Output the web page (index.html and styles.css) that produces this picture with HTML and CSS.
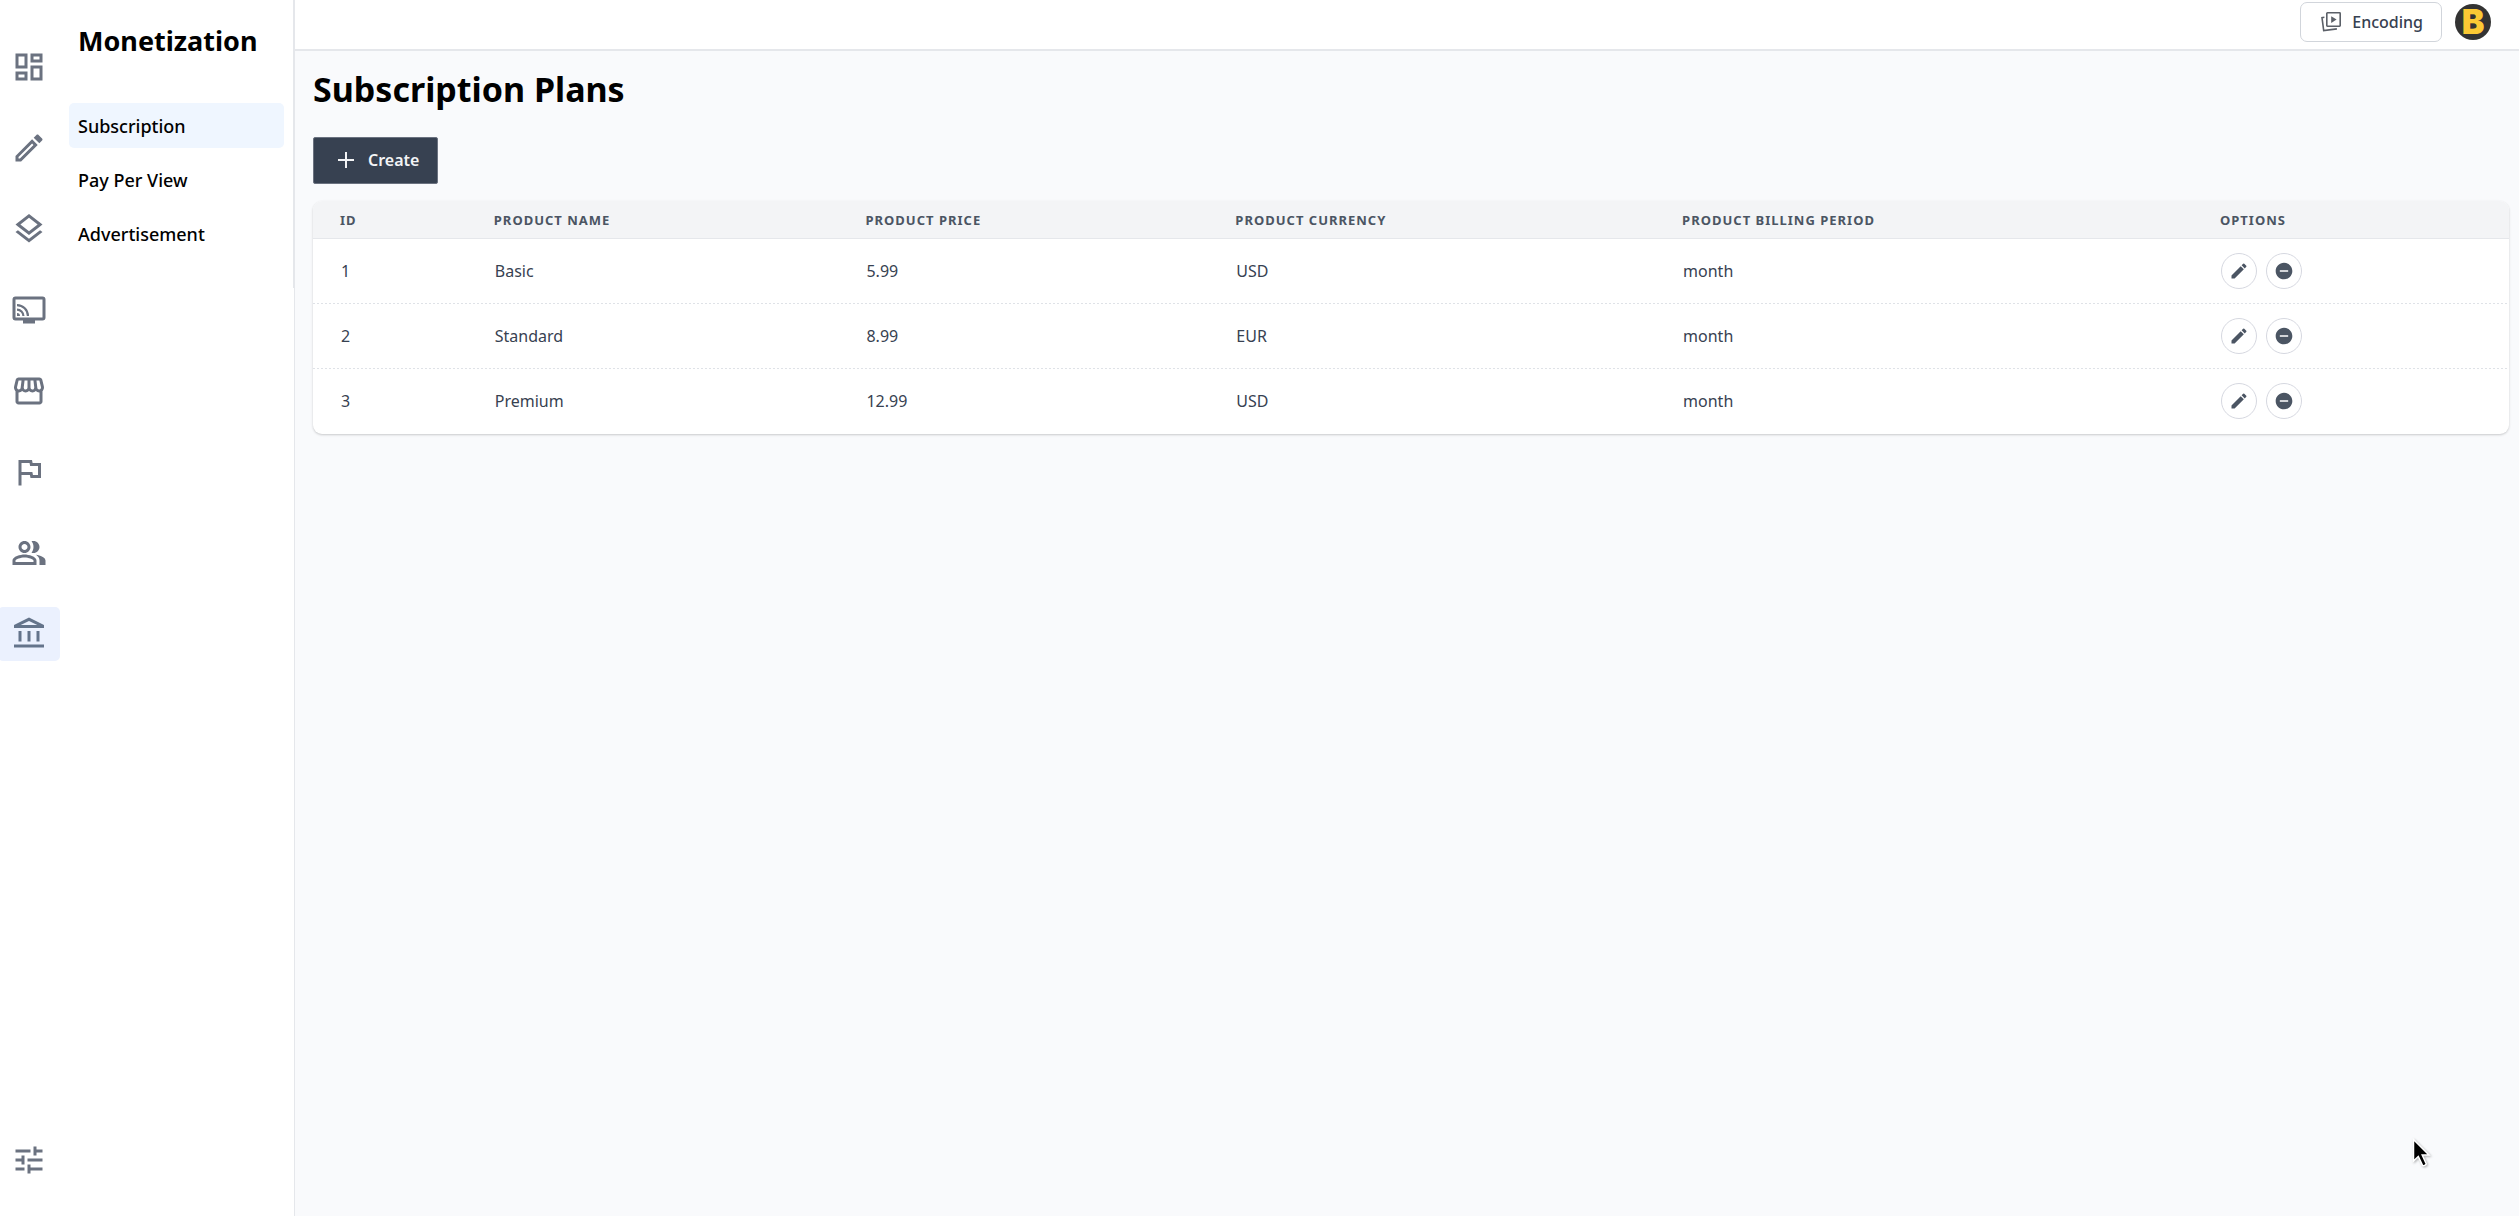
FILE: index.html
```html
<!DOCTYPE html>
<html lang="en">
<head>
<meta charset="utf-8">
<title>Subscription Plans</title>
<link rel="stylesheet" href="styles.css">
</head>
<body>
<svg class="sprite" aria-hidden="true">
  <symbol id="edit" viewBox="0 0 24 24"><path d="M3 17.25V21h3.750L17.810 9.940l-3.750-3.750L3 17.250zM20.710 7.040a1 1 0 0 0 0-1.410l-2.340-2.340a1 1 0 0 0-1.410 0l-1.830 1.830 3.750 3.750 1.830-1.830z"/></symbol>
  <symbol id="remove" viewBox="0 0 24 24"><path d="M12 2C6.480 2 2 6.480 2 12s4.480 10 10 10 10-4.480 10-10S17.520 2 12 2zm5 11H7v-2h10v2z"/></symbol>
</svg>
<div class="app">
  <aside class="sidebar">
    <nav class="rail" aria-label="Sections">
      <a class="rail-item" href="#" aria-label="Dashboard"><svg viewBox="0 0 24 24"><path d="M19 5v2h-4V5h4M9 5v6H5V5h4m10 8v6h-4v-6h4M9 17v2H5v-2h4M21 3h-8v6h8V3zM11 3H3v10h8V3zm10 8h-8v10h8V11zm-10 4H3v6h8v-6z"/></svg></a>
      <a class="rail-item" href="#" aria-label="Edit"><svg viewBox="0 0 24 24"><path d="M14.060 9.020l.920.920L5.920 19H5v-.920l9.060-9.060M17.660 3c-.250 0-.510.100-.700.290l-1.830 1.830 3.750 3.750 1.830-1.830c.390-.390.390-1.020 0-1.410l-2.340-2.340c-.200-.200-.450-.290-.710-.290zm-3.600 3.190L3 17.250V21h3.750L17.810 9.940l-3.750-3.750z"/></svg></a>
      <a class="rail-item" href="#" aria-label="Layers"><svg viewBox="0 0 24 24"><path d="M11.990 18.540l-7.370-5.730L3 14.070l9 7 9-7-1.630-1.270-7.380 5.740zM12 16l7.360-5.730L21 9l-9-7-9 7 1.630 1.270L12 16zm0-11.470L17.740 9 12 13.470 6.260 9 12 4.530z"/></svg></a>
      <a class="rail-item" href="#" aria-label="Streams"><svg viewBox="0 0 24 24"><path d="M21 3H3a2 2 0 0 0-2 2v12a2 2 0 0 0 2 2h5v2h8v-2h5a2 2 0 0 0 2-2V5a2 2 0 0 0-2-2zm0 14H3V5h18v12zM4 14v2h2a2 2 0 0 0-2-2zm0-3v1.430A3.570 3.570 0 0 1 7.570 16H9a5 5 0 0 0-5-5zm0-3v1.450A6.550 6.550 0 0 1 10.550 16H12a8 8 0 0 0-8-8z"/></svg></a>
      <a class="rail-item" href="#" aria-label="Store"><svg viewBox="0 0 24 24"><path d="M21.900 8.890l-1.050-4.370c-.220-.900-1-1.520-1.910-1.520H5.050c-.900 0-1.690.630-1.900 1.520L2.100 8.890c-.240 1.020-.020 2.060.620 2.880.080.110.190.190.280.290V19c0 1.100.900 2 2 2h14c1.100 0 2-.900 2-2v-6.940c.090-.090.200-.180.280-.280.640-.820.870-1.870.620-2.890zM18.910 4.990l1.050 4.370c.100.420.010.840-.250 1.170-.140.180-.440.470-.940.470-.610 0-1.140-.490-1.210-1.140L16.980 5l1.930-.010zM13 5h1.960l.540 4.520c.050.390-.070.780-.330 1.070-.220.260-.540.410-.950.410-.670 0-1.220-.590-1.220-1.310V5zM8.490 9.520L9.040 5H11v4.690c0 .720-.550 1.310-1.290 1.310-.340 0-.650-.150-.890-.410-.250-.290-.370-.680-.330-1.070zM4.040 9.360L5.050 5h1.970l-.580 4.860c-.080.650-.600 1.140-1.210 1.140-.490 0-.800-.290-.930-.470-.270-.320-.360-.750-.260-1.170zM5 19v-6.030c.080.010.150.030.230.030.870 0 1.660-.360 2.240-.950.600.600 1.400.950 2.310.950.870 0 1.650-.360 2.230-.930.590.570 1.390.930 2.290.930.840 0 1.640-.350 2.240-.950.580.590 1.370.950 2.240.950.080 0 .150-.020.230-.030V19H5z"/></svg></a>
      <a class="rail-item" href="#" aria-label="Reports"><svg viewBox="0 0 24 24"><path d="M12.360 6l.400 2H18v6h-3.360l-.400-2H7V6h5.360M14 4H5v17h2v-7h5.600l.400 2h7V6h-5.600L14 4z"/></svg></a>
      <a class="rail-item" href="#" aria-label="Users"><svg viewBox="0 0 24 24"><path d="M16.670 13.130C18.040 14.060 19 15.320 19 17v3h4v-3c0-2.180-3.570-3.470-6.330-3.870zM15 12c2.210 0 4-1.790 4-4s-1.790-4-4-4c-.470 0-.910.100-1.330.240C14.500 5.270 15 6.580 15 8s-.500 2.730-1.330 3.760c.420.140.860.240 1.330.240zM9 12c2.210 0 4-1.790 4-4s-1.790-4-4-4-4 1.790-4 4 1.790 4 4 4zm0-6c1.100 0 2 .900 2 2s-.900 2-2 2-2-.900-2-2 .900-2 2-2zM9 13c-2.670 0-8 1.340-8 4v3h16v-3c0-2.660-5.330-4-8-4zm6 5H3v-.990C3.200 16.290 6.300 15 9 15s5.800 1.290 6 2v1z"/></svg></a>
      <a class="rail-item active" href="#" aria-label="Monetization"><svg viewBox="0 0 24 24"><path fill-rule="evenodd" d="M5 10h2v7H5zM11 10h2v7h-2zM17 10h2v7h-2zM2 19h20v2H2zM12 1l10 5v2H2V6zM6.450 6h11.100L12 3.250z"/></svg></a>
      <a class="rail-item last" href="#" aria-label="Settings"><svg viewBox="0 0 24 24"><path d="M3 17v2h6v-2H3zM3 5v2h10V5H3zm10 16v-2h8v-2h-8v-2h-2v6h2zM7 9v2H3v2h4v2h2V9H7zm14 4v-2H11v2h10zm-6-4h2V7h4V5h-4V3h-2v6z"/></svg></a>
    </nav>
    <nav class="panel" aria-label="Monetization">
      <h2 class="panel-title">Monetization</h2>
      <a class="panel-link active" href="#">Subscription</a>
      <a class="panel-link" href="#">Pay Per View</a>
      <a class="panel-link" href="#">Advertisement</a>
    </nav>
  </aside>
  <div class="content">
    <header class="topbar">
      <button class="encoding" type="button"><svg viewBox="0 0 20 20" fill="none" stroke="currentColor" stroke-width="1.600"><rect x="5.800" y="0.800" width="13.400" height="13.400" rx="0.600"/><path d="M3.400 5.300L1 5.600l1.700 13 13.200-1.700"/><path d="M10.200 4.200v6.800l5.400-3.400z" fill="currentColor" stroke="none"/></svg>Encoding</button>
      <a class="avatar" href="#" aria-label="Account">B</a>
    </header>
    <main class="main">
      <h1 class="title">Subscription Plans</h1>
      <button class="create" type="button"><svg viewBox="0 0 18 18" fill="none" stroke="currentColor" stroke-width="2"><path d="M9 1v16M1 9h16"/></svg>Create</button>
      <div class="card">
        <table class="plans">
          <thead>
            <tr><th>ID</th><th>Product Name</th><th>Product Price</th><th>Product Currency</th><th>Product Billing Period</th><th>Options</th></tr>
          </thead>
          <tbody>
            <tr><td>1</td><td>Basic</td><td>5.99</td><td>USD</td><td>month</td><td><div class="actions"><button class="round" type="button" aria-label="Edit Basic"><svg><use href="#edit"/></svg></button><button class="round" type="button" aria-label="Remove Basic"><svg><use href="#remove"/></svg></button></div></td></tr>
            <tr><td>2</td><td>Standard</td><td>8.99</td><td>EUR</td><td>month</td><td><div class="actions"><button class="round" type="button" aria-label="Edit Standard"><svg><use href="#edit"/></svg></button><button class="round" type="button" aria-label="Remove Standard"><svg><use href="#remove"/></svg></button></div></td></tr>
            <tr><td>3</td><td>Premium</td><td>12.99</td><td>USD</td><td>month</td><td><div class="actions"><button class="round" type="button" aria-label="Edit Premium"><svg><use href="#edit"/></svg></button><button class="round" type="button" aria-label="Remove Premium"><svg><use href="#remove"/></svg></button></div></td></tr>
          </tbody>
        </table>
      </div>
    </main>
  </div>
</div>
<svg class="pointer" viewBox="0 0 19 30" aria-hidden="true"><path d="M1.500 1.500v21.500l4.800-4.600 4.200 9c.5 1 4.200-.6 3.700-1.700l-4-8.700h6.800z" fill="#000" stroke="#fff" stroke-width="1.500"/></svg>
</body>
</html>
```
FILE: styles.css
```css
* {
  box-sizing: border-box;
}

body {
  margin: 0;
  font-family: "Noto Sans", sans-serif;
  font-size: 16px;
  line-height: 24px;
  color: #000;
  background: #f9fafc;
}

a {
  color: inherit;
  text-decoration: none;
}

button {
  font: inherit;
  cursor: pointer;
}

.sprite {
  display: none;
}

.app {
  display: flex;
  min-height: 100vh;
}

.sidebar {
  display: flex;
  flex: none;
  align-items: stretch;
  background: #fff;
  border-right: 1px solid #e5e7eb;
}

.rail {
  display: flex;
  flex-direction: column;
  gap: 27px;
  width: 69px;
  padding: 40px 9px 29px 0;
}

.rail-item {
  display: flex;
  justify-content: center;
  margin-left: -2px;
  padding: 9px 0;
  border-radius: 5px;
  color: #6b7280;
}

.rail-item svg {
  width: 36px;
  height: 36px;
  fill: currentColor;
}

.rail-item.active {
  background: #ebf1fe;
  color: #64748b;
}

.rail-item.last {
  margin-top: auto;
}

.panel {
  display: flex;
  flex-direction: column;
  align-self: flex-start;
  gap: 9px;
  width: 225px;
  min-height: 288px;
  padding: 23px 9px 0 0;
  border-right: 1px solid #e5e7eb;
}

.panel-title {
  margin: 0 0 35px;
  padding-left: 9px;
  font-size: 27px;
  line-height: 36px;
  font-weight: 700;
}

.panel-link {
  padding: 10px 9px 8px;
  border-radius: 5px;
  font-size: 18px;
  line-height: 27px;
  font-weight: 500;
}

.panel-link.active {
  background: #eff6ff;
}

.content {
  flex: 1;
  min-width: 0;
}

.topbar {
  display: flex;
  justify-content: flex-end;
  align-items: center;
  gap: 13px;
  padding: 2px 28px 7px;
  background: #fff;
  border-bottom: 2px solid #e5e7eb;
}

.encoding {
  display: flex;
  align-items: center;
  gap: 11px;
  height: 40px;
  padding: 0 18px 0 20px;
  color: #374151;
  background: #fff;
  border: 1px solid #d1d5db;
  border-radius: 7px;
  font-weight: 500;
}

.encoding svg {
  width: 20px;
  height: 20px;
  color: #5b6068;
}

.avatar {
  display: flex;
  justify-content: center;
  align-items: center;
  width: 36px;
  height: 36px;
  border-radius: 50%;
  background: #333;
  color: #fbc934;
  font-family: Inter, sans-serif;
  font-size: 34px;
  line-height: 36px;
  font-weight: 900;
}

.main {
  padding: 18px 10px 18px 18px;
}

.title {
  margin: 0 0 27px;
  font-size: 34px;
  line-height: 41px;
  font-weight: 700;
}

.create {
  display: flex;
  align-items: center;
  gap: 13px;
  height: 47px;
  margin-bottom: 17px;
  padding: 0 18px 2px 23px;
  color: #f3f4f6;
  background: #374151;
  border: 1px solid #6b7280;
  border-radius: 2px;
  font-weight: 600;
}

.create svg {
  width: 18px;
  height: 18px;
}

.card {
  overflow: hidden;
  background: #fff;
  border-radius: 9px;
  box-shadow: 0 1px 3px rgba(0, 0, 0, 0.1), 0 1px 2px rgba(0, 0, 0, 0.1);
}

.plans {
  width: 100%;
  border-spacing: 0;
  color: #374151;
  text-align: left;
}

.plans th {
  height: 38px;
  padding: 0 27px;
  background: #f3f4f6;
  border-bottom: 1px solid #e5e7eb;
  color: #4b5563;
  font-size: 13px;
  line-height: 18px;
  font-weight: 700;
  letter-spacing: 1px;
  text-transform: uppercase;
  white-space: nowrap;
}

.plans td {
  padding: 14px 26px 15px 28px;
}

.plans tbody tr:not(:last-child) {
  background: repeating-linear-gradient(to right, #dfe2e7 0 2px, transparent 2px 4px) left bottom / 100% 1px no-repeat;
}

.actions {
  display: flex;
  gap: 9px;
  padding-right: 10px;
}

.round {
  display: flex;
  flex: none;
  justify-content: center;
  align-items: center;
  width: 36px;
  height: 36px;
  padding: 0;
  background: #fff;
  border: 1px solid #d6d8e0;
  border-radius: 50%;
  color: #4b5563;
}

.round svg {
  width: 20px;
  height: 20px;
  fill: currentColor;
}

.pointer {
  position: absolute;
  right: 88px;
  bottom: 48px;
  width: 19px;
  height: 30px;
  filter: drop-shadow(1px 1px 1px rgba(0, 0, 0, 0.3));
}
```
